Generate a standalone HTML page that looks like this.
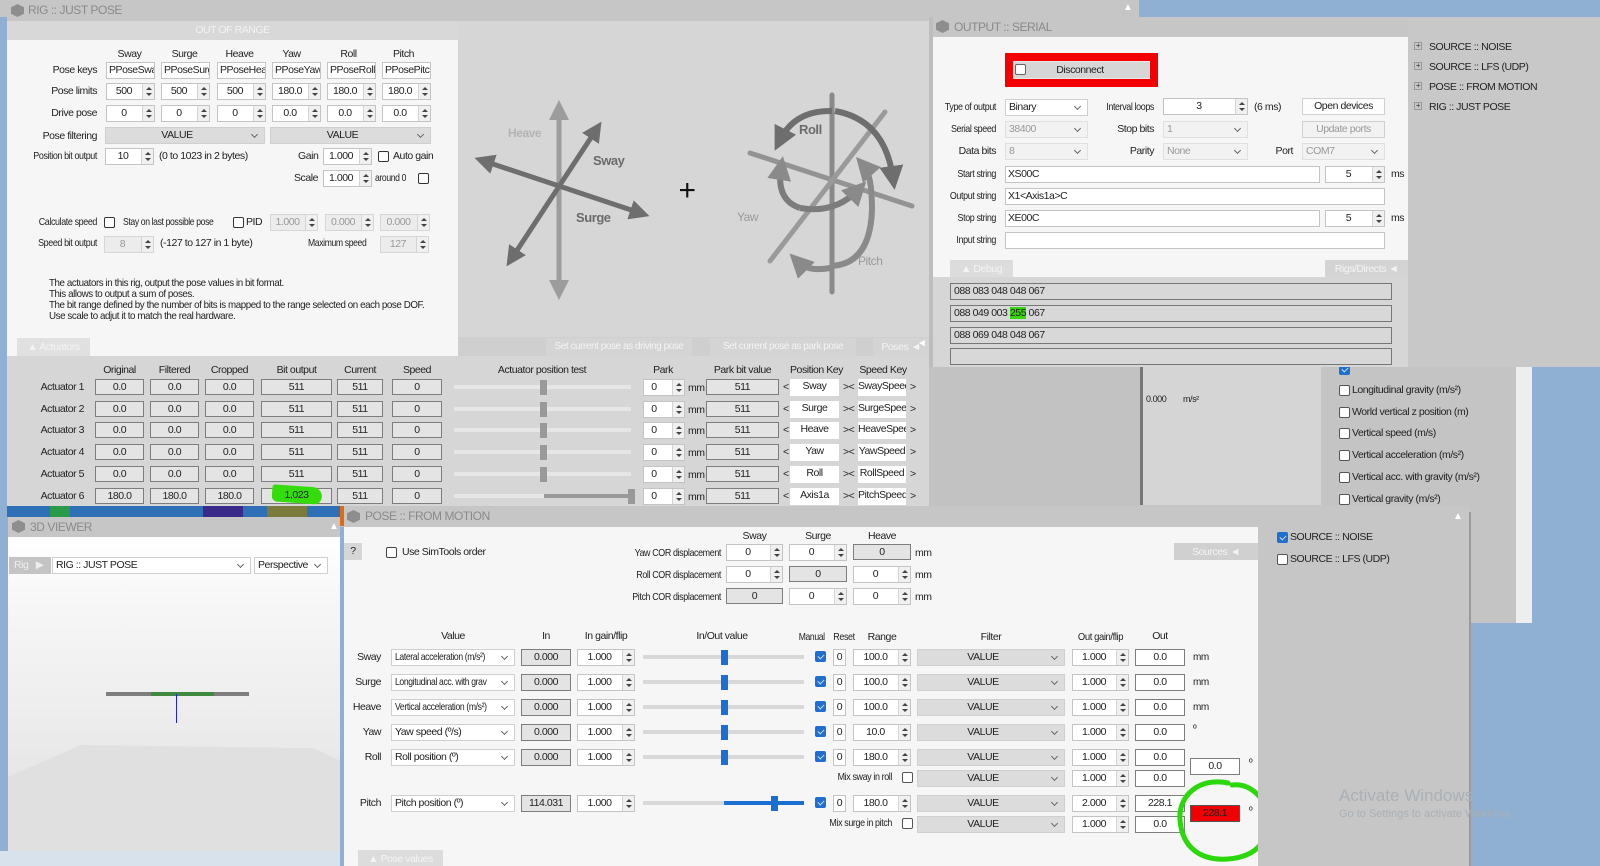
<!DOCTYPE html>
<html><head><meta charset="utf-8">
<style>
*{margin:0;padding:0;box-sizing:border-box}
body{width:1600px;height:866px;overflow:hidden;position:relative;background:#8fb0d2;font-family:"Liberation Sans",sans-serif;font-size:10.5px;color:#222;letter-spacing:-0.45px}
.a{position:absolute;white-space:nowrap}
.r{text-align:right}
.c{text-align:center}
.n{transform:scaleX(.82);transform-origin:left center}
.nr{transform:scaleX(.85);transform-origin:right center}
.b,.ro,.sp,.cb,.btn,.tab{white-space:nowrap;overflow:hidden}
.b{position:absolute;background:#fff;border:1px solid #c4c4c4;height:17px;line-height:15px;text-align:center}
.ro{position:absolute;background:#e4e4e4;border:1px solid #7d7d7d;height:16px;line-height:14px;text-align:center}
.sp{position:absolute;background:#fff;border:1px solid #c4c4c4;height:17px;line-height:15px;text-align:center;padding-right:13px}
.sp i{position:absolute;right:0;top:0;bottom:0;width:12px;background:#f0f0f0;border-left:1px solid #d4d4d4}
.sp i:before{content:"";position:absolute;left:3px;top:3px;border:3px solid transparent;border-bottom:3px solid #444;border-top:0}
.sp i:after{content:"";position:absolute;left:3px;bottom:3px;border:3px solid transparent;border-top:3px solid #444;border-bottom:0}
.dis{background:#ececec;color:#999;border-color:#d6d6d6}
.cb{position:absolute;background:#fff;border:1px solid #cfcfcf;height:17px;line-height:15px;padding-left:3px;padding-right:16px}
.cb:after{content:"";position:absolute;right:7px;top:4px;width:4px;height:4px;border-right:1px solid #666;border-bottom:1px solid #666;transform:rotate(45deg)}
.cg{background:#dcdcdc;text-align:center;padding-left:0}
.ck{position:absolute;width:11px;height:11px;border:1px solid #333;background:#fff;border-radius:2px}
.ckb{position:absolute;width:11px;height:11px;background:#1e6fd0;border-radius:2px;border:1px solid #1e6fd0}
.ckb:after{content:"";position:absolute;left:3px;top:1px;width:3px;height:5px;border-right:1px solid #cfe0f5;border-bottom:1px solid #cfe0f5;transform:rotate(45deg)}
.tb{position:absolute;background:#c6c6c6;color:#8a8a8a;font-size:11px;line-height:20px}
.ic{position:absolute;width:13px;height:13px;background:#8e8e8e;clip-path:polygon(50% 0,100% 25%,100% 75%,50% 100%,0 75%,0 25%)}
.btn{position:absolute;background:#fdfdfd;border:1px solid #d0d0d0;height:17px;line-height:15px;text-align:center}
.tab{position:absolute;background:#d4d4d4;color:#f4f4f4;line-height:18px;height:18px;text-align:center}
.trk{position:absolute;height:4px;background:#d8d8d8}
.trk2{position:absolute;height:4px;background:#e6e6e6}
.th{position:absolute;width:7px;height:15px;background:#999}
.thb{position:absolute;width:7px;height:15px;background:#1a6fd0}
.hd{position:absolute;text-align:center;white-space:nowrap}
</style></head><body>

<div class="a" style="left:0;top:0;width:1139px;height:17px;background:#c6c6c6"></div>
<div class="a" style="left:1123px;top:2px;color:#fff;font-size:10px">▲</div>

<!-- RIG panel -->
<div class="a" style="left:7px;top:0;width:922px;height:506px;background:#d6d6d6"></div>
<div class="tb" style="left:7px;top:0;width:922px;height:21px"><div class="ic" style="left:4px;top:4px"></div><span class="a" style="left:21px;top:0;font-size:12px">RIG :: JUST POSE</span></div>
<div class="a" style="left:7px;top:21px;width:451px;height:19px;background:#d8d8d8;color:#f2f2f2;text-align:center;line-height:19px">OUT OF RANGE</div>
<div class="a" style="left:7px;top:40px;width:451px;height:316px;background:#f6f6f6"></div>
<div class="a" style="left:458px;top:21px;width:471px;height:316px;background:#d6d6d6"></div>
<div class="a" style="left:458px;top:337px;width:471px;height:19px;background:#cfcfcf"></div>

<div class="hd" style="left:105px;top:48px;width:49px">Sway</div>
<div class="hd" style="left:160px;top:48px;width:49px">Surge</div>
<div class="hd" style="left:215px;top:48px;width:49px">Heave</div>
<div class="hd" style="left:267px;top:48px;width:49px">Yaw</div>
<div class="hd" style="left:324px;top:48px;width:49px">Roll</div>
<div class="hd" style="left:379px;top:48px;width:49px">Pitch</div>

<div class="a r" style="left:10px;top:64px;width:87px">Pose keys</div>
<div class="b" style="left:106px;top:62px;width:49px;text-align:left;padding-left:2px">PPoseSway</div>
<div class="b" style="left:161px;top:62px;width:49px;text-align:left;padding-left:2px">PPoseSurge</div>
<div class="b" style="left:217px;top:62px;width:49px;text-align:left;padding-left:2px">PPoseHeave</div>
<div class="b" style="left:272px;top:62px;width:49px;text-align:left;padding-left:2px">PPoseYaw</div>
<div class="b" style="left:327px;top:62px;width:49px;text-align:left;padding-left:2px">PPoseRoll</div>
<div class="b" style="left:382px;top:62px;width:49px;text-align:left;padding-left:2px">PPosePitch</div>

<div class="a r" style="left:10px;top:85px;width:87px">Pose limits</div>
<div class="sp" style="left:106px;top:83px;width:49px">500<i></i></div>
<div class="sp" style="left:161px;top:83px;width:49px">500<i></i></div>
<div class="sp" style="left:217px;top:83px;width:49px">500<i></i></div>
<div class="sp" style="left:272px;top:83px;width:49px">180.0<i></i></div>
<div class="sp" style="left:327px;top:83px;width:49px">180.0<i></i></div>
<div class="sp" style="left:382px;top:83px;width:49px">180.0<i></i></div>

<div class="a r" style="left:10px;top:107px;width:87px">Drive pose</div>
<div class="sp" style="left:106px;top:105px;width:49px">0<i></i></div>
<div class="sp" style="left:161px;top:105px;width:49px">0<i></i></div>
<div class="sp" style="left:217px;top:105px;width:49px">0<i></i></div>
<div class="sp" style="left:272px;top:105px;width:49px">0.0<i></i></div>
<div class="sp" style="left:327px;top:105px;width:49px">0.0<i></i></div>
<div class="sp" style="left:382px;top:105px;width:49px">0.0<i></i></div>

<div class="a r" style="left:10px;top:130px;width:87px">Pose filtering</div>
<div class="cb cg" style="left:105px;top:127px;width:160px">VALUE</div>
<div class="cb cg" style="left:270px;top:127px;width:161px">VALUE</div>

<div class="a r nr" style="left:10px;top:150px;width:87px">Position bit output</div>
<div class="sp" style="left:105px;top:148px;width:49px">10<i></i></div>
<div class="a" style="left:159px;top:150px">(0 to 1023 in 2 bytes)</div>
<div class="a" style="left:298px;top:150px">Gain</div>
<div class="sp" style="left:323px;top:148px;width:49px">1.000<i></i></div>
<div class="ck" style="left:378px;top:151px"></div>
<div class="a" style="left:393px;top:150px">Auto gain</div>
<div class="a" style="left:294px;top:172px">Scale</div>
<div class="sp" style="left:323px;top:170px;width:49px">1.000<i></i></div>
<div class="a n" style="left:375px;top:172px">around 0</div>
<div class="ck" style="left:418px;top:173px"></div>

<div class="a r nr" style="left:10px;top:216px;width:87px">Calculate speed</div>
<div class="ck" style="left:104px;top:217px"></div>
<div class="a n" style="left:123px;top:216px">Stay on last possible pose</div>
<div class="ck" style="left:233px;top:217px"></div>
<div class="a" style="left:246px;top:216px">PID</div>
<div class="sp dis" style="left:270px;top:214px;width:48px">1.000<i></i></div>
<div class="sp dis" style="left:325px;top:214px;width:49px">0.000<i></i></div>
<div class="sp dis" style="left:380px;top:214px;width:50px">0.000<i></i></div>
<div class="a r nr" style="left:10px;top:237px;width:87px">Speed bit output</div>
<div class="sp dis" style="left:104px;top:236px;width:50px">8<i></i></div>
<div class="a" style="left:160px;top:237px">(-127 to 127 in 1 byte)</div>
<div class="a n" style="left:308px;top:237px">Maximum speed</div>
<div class="sp dis" style="left:380px;top:236px;width:49px">127<i></i></div>

<div class="a n" style="left:49px;top:278px;font-size:10.5px;line-height:11px;transform:scaleX(.93)">The actuators in this rig, output the pose values in bit format.<br>This allows to output a sum of poses.<br>The bit range defined by the number of bits is mapped to the range selected on each pose DOF.<br>Use scale to adjut it to match the real hardware.</div>

<svg class="a" style="left:458px;top:40px" width="471" height="296" viewBox="458 40 471 296">
<defs>
<marker id="m1" markerWidth="4" markerHeight="4" refX="2" refY="2" orient="auto-start-reverse"><path d="M0,0 L4,2 L0,4 z" fill="#9c9c9c"/></marker>
<marker id="m2" markerWidth="4" markerHeight="4" refX="2" refY="2" orient="auto-start-reverse"><path d="M0,0 L4,2 L0,4 z" fill="#6e6e6e"/></marker>
<marker id="m3" markerWidth="4" markerHeight="4" refX="2" refY="2" orient="auto"><path d="M0,0 L4,2 L0,4 z" fill="#6e6e6e"/></marker>
<marker id="m4" markerWidth="4" markerHeight="4" refX="2" refY="2" orient="auto"><path d="M0,0 L4,2 L0,4 z" fill="#8a8a8a"/></marker>
</defs>
<line x1="559" y1="110" x2="559" y2="290" stroke="#9c9c9c" stroke-width="5" marker-start="url(#m1)" marker-end="url(#m1)"/>
<line x1="484" y1="161" x2="640" y2="213" stroke="#6e6e6e" stroke-width="5" marker-start="url(#m2)" marker-end="url(#m2)"/>
<line x1="512" y1="258" x2="596" y2="130" stroke="#6e6e6e" stroke-width="5" marker-start="url(#m2)" marker-end="url(#m2)"/>
<text x="508" y="137" font-family="Liberation Sans" font-size="12" fill="#b4b4b4" font-weight="bold">Heave</text>
<text x="593" y="165" font-family="Liberation Sans" font-size="13" fill="#6a6a6a" font-weight="bold">Sway</text>
<text x="576" y="222" font-family="Liberation Sans" font-size="13" fill="#6a6a6a" font-weight="bold">Surge</text>
<text x="687" y="200" font-family="Liberation Sans" font-size="30" fill="#111" text-anchor="middle">+</text>
<line x1="832" y1="95" x2="832" y2="292" stroke="#8a8a8a" stroke-width="5" stroke-linecap="round"/>
<line x1="750" y1="153" x2="912" y2="206" stroke="#939393" stroke-width="5" stroke-linecap="round"/>
<line x1="770" y1="261" x2="885" y2="112" stroke="#9a9a9a" stroke-width="5" stroke-linecap="round"/>
<path d="M832,111 Q795,110 780,140" fill="none" stroke="#6e6e6e" stroke-width="6" marker-end="url(#m3)"/>
<path d="M835,111 Q885,120 893,178" fill="none" stroke="#6e6e6e" stroke-width="6" marker-end="url(#m3)"/>
<path d="M800,208 Q835,214 858,190" fill="none" stroke="#7c7c7c" stroke-width="6" marker-end="url(#m4)"/>
<path d="M800,208 Q776,200 781,168" fill="none" stroke="#7c7c7c" stroke-width="6" marker-end="url(#m4)"/>
<path d="M830,266 Q870,265 872,210 Q872,175 864,166" fill="none" stroke="#8a8a8a" stroke-width="6" marker-end="url(#m4)"/>
<path d="M830,268 Q808,272 798,262" fill="none" stroke="#8a8a8a" stroke-width="6" marker-end="url(#m4)"/>
<text x="799" y="134" font-family="Liberation Sans" font-size="13" fill="#6a6a6a" font-weight="bold">Roll</text>
<text x="737" y="221" font-family="Liberation Sans" font-size="12" fill="#9a9a9a">Yaw</text>
<text x="858" y="265" font-family="Liberation Sans" font-size="12" fill="#9a9a9a">Pitch</text>
</svg>

<div class="tab" style="left:17px;top:338px;width:73px;background:#e0e0e0">▲ Actuators</div>
<div class="tab" style="left:546px;top:338px;width:146px;font-size:10px">Set current pose as driving pose</div>
<div class="tab" style="left:710px;top:338px;width:146px;font-size:10px">Set current pose as park pose</div>
<div class="tab" style="left:873px;top:338px;width:56px">Poses ◄</div>

<div class="hd" style="left:95px;top:364px;width:49px">Original</div>
<div class="hd" style="left:150px;top:364px;width:49px">Filtered</div>
<div class="hd" style="left:205px;top:364px;width:49px">Cropped</div>
<div class="hd" style="left:261px;top:364px;width:71px">Bit output</div>
<div class="hd" style="left:337px;top:364px;width:46px">Current</div>
<div class="hd" style="left:392px;top:364px;width:50px">Speed</div>
<div class="hd" style="left:480px;top:364px;width:124px">Actuator position test</div>
<div class="hd" style="left:643px;top:364px;width:40px">Park</div>
<div class="hd" style="left:706px;top:364px;width:73px">Park bit value</div>
<div class="hd" style="left:790px;top:364px;width:50px">Position Key</div>
<div class="hd" style="left:858px;top:364px;width:50px">Speed Key</div>

<div class="a r" style="left:20px;top:381px;width:64px">Actuator 1</div>
<div class="ro" style="left:95px;top:379px;width:49px">0.0</div><div class="ro" style="left:150px;top:379px;width:49px">0.0</div><div class="ro" style="left:205px;top:379px;width:49px">0.0</div><div class="ro" style="left:261px;top:379px;width:71px">511</div><div class="ro" style="left:337px;top:379px;width:46px">511</div><div class="ro" style="left:392px;top:379px;width:50px">0</div>
<div class="trk2" style="left:454px;top:385px;width:177px"></div><div class="th" style="left:540px;top:380px"></div>
<div class="sp" style="left:643px;top:379px;width:42px;padding-right:20px">0<i></i></div><div class="a" style="left:688px;top:382px">mm</div>
<div class="ro" style="left:706px;top:379px;width:73px">511</div><div class="a" style="left:783px;top:381px">&lt;</div>
<div class="b" style="left:790px;top:379px;width:49px;border:0">Sway</div><div class="a" style="left:843px;top:381px">&gt;&lt;</div>
<div class="b" style="left:858px;top:379px;width:48px;border:0">SwaySpeed</div><div class="a" style="left:910px;top:381px">&gt;</div>

<div class="a r" style="left:20px;top:403px;width:64px">Actuator 2</div>
<div class="ro" style="left:95px;top:401px;width:49px">0.0</div><div class="ro" style="left:150px;top:401px;width:49px">0.0</div><div class="ro" style="left:205px;top:401px;width:49px">0.0</div><div class="ro" style="left:261px;top:401px;width:71px">511</div><div class="ro" style="left:337px;top:401px;width:46px">511</div><div class="ro" style="left:392px;top:401px;width:50px">0</div>
<div class="trk2" style="left:454px;top:407px;width:177px"></div><div class="th" style="left:540px;top:402px"></div>
<div class="sp" style="left:643px;top:401px;width:42px;padding-right:20px">0<i></i></div><div class="a" style="left:688px;top:404px">mm</div>
<div class="ro" style="left:706px;top:401px;width:73px">511</div><div class="a" style="left:783px;top:403px">&lt;</div>
<div class="b" style="left:790px;top:401px;width:49px;border:0">Surge</div><div class="a" style="left:843px;top:403px">&gt;&lt;</div>
<div class="b" style="left:858px;top:401px;width:48px;border:0">SurgeSpeed</div><div class="a" style="left:910px;top:403px">&gt;</div>

<div class="a r" style="left:20px;top:424px;width:64px">Actuator 3</div>
<div class="ro" style="left:95px;top:422px;width:49px">0.0</div><div class="ro" style="left:150px;top:422px;width:49px">0.0</div><div class="ro" style="left:205px;top:422px;width:49px">0.0</div><div class="ro" style="left:261px;top:422px;width:71px">511</div><div class="ro" style="left:337px;top:422px;width:46px">511</div><div class="ro" style="left:392px;top:422px;width:50px">0</div>
<div class="trk2" style="left:454px;top:428px;width:177px"></div><div class="th" style="left:540px;top:423px"></div>
<div class="sp" style="left:643px;top:422px;width:42px;padding-right:20px">0<i></i></div><div class="a" style="left:688px;top:425px">mm</div>
<div class="ro" style="left:706px;top:422px;width:73px">511</div><div class="a" style="left:783px;top:424px">&lt;</div>
<div class="b" style="left:790px;top:422px;width:49px;border:0">Heave</div><div class="a" style="left:843px;top:424px">&gt;&lt;</div>
<div class="b" style="left:858px;top:422px;width:48px;border:0">HeaveSpeed</div><div class="a" style="left:910px;top:424px">&gt;</div>

<div class="a r" style="left:20px;top:446px;width:64px">Actuator 4</div>
<div class="ro" style="left:95px;top:444px;width:49px">0.0</div><div class="ro" style="left:150px;top:444px;width:49px">0.0</div><div class="ro" style="left:205px;top:444px;width:49px">0.0</div><div class="ro" style="left:261px;top:444px;width:71px">511</div><div class="ro" style="left:337px;top:444px;width:46px">511</div><div class="ro" style="left:392px;top:444px;width:50px">0</div>
<div class="trk2" style="left:454px;top:450px;width:177px"></div><div class="th" style="left:540px;top:445px"></div>
<div class="sp" style="left:643px;top:444px;width:42px;padding-right:20px">0<i></i></div><div class="a" style="left:688px;top:447px">mm</div>
<div class="ro" style="left:706px;top:444px;width:73px">511</div><div class="a" style="left:783px;top:446px">&lt;</div>
<div class="b" style="left:790px;top:444px;width:49px;border:0">Yaw</div><div class="a" style="left:843px;top:446px">&gt;&lt;</div>
<div class="b" style="left:858px;top:444px;width:48px;border:0">YawSpeed</div><div class="a" style="left:910px;top:446px">&gt;</div>

<div class="a r" style="left:20px;top:468px;width:64px">Actuator 5</div>
<div class="ro" style="left:95px;top:466px;width:49px">0.0</div><div class="ro" style="left:150px;top:466px;width:49px">0.0</div><div class="ro" style="left:205px;top:466px;width:49px">0.0</div><div class="ro" style="left:261px;top:466px;width:71px">511</div><div class="ro" style="left:337px;top:466px;width:46px">511</div><div class="ro" style="left:392px;top:466px;width:50px">0</div>
<div class="trk2" style="left:454px;top:472px;width:177px"></div><div class="th" style="left:540px;top:467px"></div>
<div class="sp" style="left:643px;top:466px;width:42px;padding-right:20px">0<i></i></div><div class="a" style="left:688px;top:469px">mm</div>
<div class="ro" style="left:706px;top:466px;width:73px">511</div><div class="a" style="left:783px;top:468px">&lt;</div>
<div class="b" style="left:790px;top:466px;width:49px;border:0">Roll</div><div class="a" style="left:843px;top:468px">&gt;&lt;</div>
<div class="b" style="left:858px;top:466px;width:48px;border:0">RollSpeed</div><div class="a" style="left:910px;top:468px">&gt;</div>

<div class="a r" style="left:20px;top:490px;width:64px">Actuator 6</div>
<div class="ro" style="left:95px;top:488px;width:49px">180.0</div><div class="ro" style="left:150px;top:488px;width:49px">180.0</div><div class="ro" style="left:205px;top:488px;width:49px">180.0</div>
<div class="ro" style="left:261px;top:488px;width:71px"></div>
<div class="a" style="left:272px;top:486px;width:50px;height:17px;background:#35dc0c;border-radius:3px 10px 8px 6px;transform:rotate(4deg)"></div>
<div class="a c" style="left:261px;top:489px;width:71px">1,023</div>
<div class="ro" style="left:337px;top:488px;width:46px">511</div><div class="ro" style="left:392px;top:488px;width:50px">0</div>
<div class="trk2" style="left:454px;top:494px;width:177px"></div><div class="trk" style="left:544px;top:494px;width:87px;background:#9a9a9a"></div><div class="th" style="left:628px;top:489px"></div>
<div class="sp" style="left:643px;top:488px;width:42px;padding-right:20px">0<i></i></div><div class="a" style="left:688px;top:491px">mm</div>
<div class="ro" style="left:706px;top:488px;width:73px">511</div><div class="a" style="left:783px;top:490px">&lt;</div>
<div class="b" style="left:790px;top:488px;width:49px;border:0">Axis1a</div><div class="a" style="left:843px;top:490px">&gt;&lt;</div>
<div class="b" style="left:858px;top:488px;width:48px;border:0">PitchSpeed</div><div class="a" style="left:910px;top:490px">&gt;</div>

<div class="a" style="left:7px;top:506px;width:333px;height:11px;background:#2f6fb8"></div>
<div class="a" style="left:50px;top:506px;width:20px;height:11px;background:#2a9a4a"></div>
<div class="a" style="left:203px;top:506px;width:40px;height:11px;background:#3a2a8a"></div>
<div class="a" style="left:267px;top:506px;width:40px;height:11px;background:#7a7a3a"></div>

<div class="a" style="left:929px;top:365px;width:211px;height:162px;background:#c2c2c2"></div>
<div class="a" style="left:340px;top:506px;width:800px;height:21px;background:#c6c6c6"></div>

<div class="a" style="left:1140px;top:365px;width:376px;height:258px;background:#c4c4c4"></div>
<div class="a" style="left:1140px;top:365px;width:3px;height:140px;background:#777"></div>
<div class="a" style="left:1143px;top:365px;width:178px;height:140px;background:#d5d5d5"></div>
<div class="a" style="left:1146px;top:394px;font-size:9px">0.000</div>
<div class="a" style="left:1183px;top:394px;font-size:9px">m/s²</div>
<div class="a" style="left:1516px;top:365px;width:16px;height:258px;background:#eeeeee"></div>
<div class="ckb" style="left:1339px;top:364px"></div>
<div class="ck" style="left:1339px;top:385px;border-color:#555"></div><div class="a" style="left:1352px;top:384px">Longitudinal gravity (m/s²)</div>
<div class="ck" style="left:1339px;top:407px;border-color:#555"></div><div class="a" style="left:1352px;top:406px">World vertical z position (m)</div>
<div class="ck" style="left:1339px;top:428px;border-color:#555"></div><div class="a" style="left:1352px;top:427px">Vertical speed (m/s)</div>
<div class="ck" style="left:1339px;top:450px;border-color:#555"></div><div class="a" style="left:1352px;top:449px">Vertical acceleration (m/s²)</div>
<div class="ck" style="left:1339px;top:472px;border-color:#555"></div><div class="a" style="left:1352px;top:471px">Vertical acc. with gravity (m/s²)</div>
<div class="ck" style="left:1339px;top:494px;border-color:#555"></div><div class="a" style="left:1352px;top:493px">Vertical gravity (m/s²)</div>

<!-- OUTPUT SERIAL -->
<div class="a" style="left:929px;top:17px;width:671px;height:350px;background:#c8c8c8"></div>
<div class="a" style="left:929px;top:17px;width:4px;height:350px;background:#bdbdbd"></div>
<div class="a" style="left:917px;top:338px;color:#fff;font-size:10px">◄</div>
<div class="tb" style="left:933px;top:17px;width:475px;height:20px"><div class="ic" style="left:3px;top:3px"></div><span class="a" style="left:21px;top:0;font-size:12px">OUTPUT :: SERIAL</span></div>
<div class="a" style="left:933px;top:37px;width:475px;height:223px;background:#f6f6f6"></div>
<div class="a" style="left:933px;top:277px;width:475px;height:90px;background:#d6d6d6"></div>
<div class="a" style="left:933px;top:260px;width:475px;height:17px;background:#f6f6f6"></div>
<div class="tab" style="left:950px;top:260px;width:63px;height:17px;background:#dcdcdc">▲ Debug</div>
<div class="tab" style="left:1325px;top:260px;width:83px;height:17px">Rigs/Directs ◄</div>

<div class="a" style="left:1005px;top:53px;width:153px;height:34px;background:#f40000"></div>
<div class="a" style="left:1013px;top:61px;width:137px;height:18px;background:#d6d6d6;border:1px solid #e8e8e8"></div>
<div class="ck" style="left:1015px;top:64px;border-color:#666"></div>
<div class="a c" style="left:1030px;top:64px;width:100px">Disconnect</div>

<div class="a r nr" style="left:930px;top:101px;width:66px">Type of output</div>
<div class="cb" style="left:1005px;top:99px;width:83px">Binary</div>
<div class="a r nr" style="left:1086px;top:101px;width:68px">Interval loops</div>
<div class="sp" style="left:1163px;top:98px;width:85px">3<i></i></div>
<div class="a" style="left:1254px;top:101px">(6 ms)</div>
<div class="btn" style="left:1302px;top:98px;width:83px">Open devices</div>

<div class="a r nr" style="left:930px;top:123px;width:66px">Serial speed</div>
<div class="cb" style="left:1005px;top:121px;width:83px;color:#999;background:#f2f2f2;border-color:#e0e0e0">38400</div>
<div class="a r" style="left:1090px;top:123px;width:64px">Stop bits</div>
<div class="cb" style="left:1163px;top:121px;width:85px;color:#999;background:#f2f2f2;border-color:#e0e0e0">1</div>
<div class="btn" style="left:1302px;top:121px;width:83px;color:#999;background:#f2f2f2">Update ports</div>

<div class="a r" style="left:930px;top:145px;width:66px">Data bits</div>
<div class="cb" style="left:1005px;top:143px;width:83px;color:#999;background:#f2f2f2;border-color:#e0e0e0">8</div>
<div class="a r" style="left:1090px;top:145px;width:64px">Parity</div>
<div class="cb" style="left:1163px;top:143px;width:85px;color:#999;background:#f2f2f2;border-color:#e0e0e0">None</div>
<div class="a r" style="left:1260px;top:145px;width:33px">Port</div>
<div class="cb" style="left:1302px;top:143px;width:83px;color:#999;background:#f2f2f2;border-color:#e0e0e0">COM7</div>

<div class="a r nr" style="left:930px;top:168px;width:66px">Start string</div>
<div class="b" style="left:1005px;top:166px;width:315px;text-align:left;padding-left:2px">XS00C</div>
<div class="sp" style="left:1325px;top:166px;width:60px">5<i></i></div>
<div class="a" style="left:1391px;top:168px">ms</div>
<div class="a r nr" style="left:930px;top:190px;width:66px">Output string</div>
<div class="b" style="left:1005px;top:188px;width:380px;text-align:left;padding-left:2px">X1&lt;Axis1a&gt;C</div>
<div class="a r nr" style="left:930px;top:212px;width:66px">Stop string</div>
<div class="b" style="left:1005px;top:210px;width:315px;text-align:left;padding-left:2px">XE00C</div>
<div class="sp" style="left:1325px;top:210px;width:60px">5<i></i></div>
<div class="a" style="left:1391px;top:212px">ms</div>
<div class="a r nr" style="left:930px;top:234px;width:66px">Input string</div>
<div class="b" style="left:1005px;top:232px;width:380px"></div>

<div class="a" style="left:950px;top:283px;width:442px;height:17px;border:1px solid #777;background:#d8d8d8;padding-left:3px;line-height:15px">088 083 048 048 067</div>
<div class="a" style="left:950px;top:305px;width:442px;height:17px;border:1px solid #777;background:#d8d8d8;padding-left:3px;line-height:15px">088 049 003 <span style="background:#3ad40e">255</span> 067</div>
<div class="a" style="left:950px;top:327px;width:442px;height:17px;border:1px solid #777;background:#d8d8d8;padding-left:3px;line-height:15px">088 069 048 048 067</div>
<div class="a" style="left:950px;top:348px;width:442px;height:17px;border:1px solid #777;background:#d8d8d8"></div>

<div class="a" style="left:1414px;top:42px;width:8px;height:8px;border:1px solid #999;font-size:8px;line-height:6px;text-align:center;color:#333">+</div><div class="a" style="left:1429px;top:41px">SOURCE :: NOISE</div>
<div class="a" style="left:1414px;top:62px;width:8px;height:8px;border:1px solid #999;font-size:8px;line-height:6px;text-align:center;color:#333">+</div><div class="a" style="left:1429px;top:61px">SOURCE :: LFS (UDP)</div>
<div class="a" style="left:1414px;top:82px;width:8px;height:8px;border:1px solid #999;font-size:8px;line-height:6px;text-align:center;color:#333">+</div><div class="a" style="left:1429px;top:81px">POSE :: FROM MOTION</div>
<div class="a" style="left:1414px;top:102px;width:8px;height:8px;border:1px solid #999;font-size:8px;line-height:6px;text-align:center;color:#333">+</div><div class="a" style="left:1429px;top:101px">RIG :: JUST POSE</div>

<!-- 3D viewer -->
<div class="tb" style="left:8px;top:517px;width:332px;height:20px"><div class="ic" style="left:4px;top:3px"></div><span class="a" style="left:22px;top:0;font-size:12px">3D VIEWER</span><span class="a" style="left:321px;top:0;color:#fff;font-size:10px">▲</span></div>
<div class="a" style="left:8px;top:537px;width:332px;height:314px;background:linear-gradient(#ffffff 0%,#f7f7f7 20%,#ececec 60%,#dedede 100%)"></div>
<div class="a" style="left:8px;top:745px;width:332px;height:106px;background:#e0e0e0;clip-path:polygon(0 30%,22% 0,92% 3%,100% 15%,100% 100%,0 100%)"></div>
<div class="a" style="left:9px;top:557px;width:42px;height:17px;background:#c4c4c4;color:#eee;line-height:17px;padding-left:5px">Rig &nbsp; ▶</div>
<div class="cb" style="left:52px;top:557px;width:199px">RIG :: JUST POSE</div>
<div class="cb" style="left:254px;top:557px;width:74px">Perspective</div>
<div class="a" style="left:106px;top:692px;width:143px;height:4px;background:#7e7e7e"></div>
<div class="a" style="left:151px;top:692px;width:63px;height:4px;background:#3f8a3f"></div>
<div class="a" style="left:176px;top:694px;width:1px;height:29px;background:#2020f0"></div>
<div class="a" style="left:0;top:851px;width:340px;height:15px;background:#d8e2ec"></div>

<!-- POSE :: FROM MOTION -->
<div class="tb" style="left:344px;top:506px;width:914px;height:21px"><div class="ic" style="left:3px;top:4px"></div><span class="a" style="left:21px;top:0;font-size:12px">POSE :: FROM MOTION</span></div>
<div class="a" style="left:340px;top:506px;width:4px;height:20px;background:#e06a10"></div>
<div class="a" style="left:344px;top:527px;width:914px;height:339px;background:#f6f6f6"></div>
<div class="a c" style="left:344px;top:543px;width:18px;height:17px;background:#d6d6d6;line-height:17px">?</div>
<div class="ck" style="left:386px;top:547px;border-color:#444"></div>
<div class="a" style="left:402px;top:546px">Use SimTools order</div>
<div class="tab" style="left:1174px;top:543px;width:84px;height:17px;background:#d0d0d0">Sources ◄</div>

<div class="hd" style="left:726px;top:530px;width:57px">Sway</div>
<div class="hd" style="left:789px;top:530px;width:58px">Surge</div>
<div class="hd" style="left:853px;top:530px;width:58px">Heave</div>
<div class="a r nr" style="left:600px;top:547px;width:121px">Yaw COR displacement</div>
<div class="sp" style="left:726px;top:544px;width:57px">0<i></i></div>
<div class="sp" style="left:789px;top:544px;width:58px">0<i></i></div>
<div class="ro" style="left:853px;top:544px;width:58px">0</div>
<div class="a" style="left:915px;top:547px">mm</div>
<div class="a r nr" style="left:600px;top:569px;width:121px">Roll COR displacement</div>
<div class="sp" style="left:726px;top:566px;width:57px">0<i></i></div>
<div class="ro" style="left:789px;top:566px;width:58px">0</div>
<div class="sp" style="left:853px;top:566px;width:58px">0<i></i></div>
<div class="a" style="left:915px;top:569px">mm</div>
<div class="a r nr" style="left:600px;top:591px;width:121px">Pitch COR displacement</div>
<div class="ro" style="left:726px;top:588px;width:57px">0</div>
<div class="sp" style="left:789px;top:588px;width:58px">0<i></i></div>
<div class="sp" style="left:853px;top:588px;width:58px">0<i></i></div>
<div class="a" style="left:915px;top:591px">mm</div>

<div class="hd" style="left:391px;top:630px;width:124px">Value</div>
<div class="hd" style="left:521px;top:630px;width:50px">In</div>
<div class="hd" style="left:577px;top:630px;width:58px">In gain/flip</div>
<div class="hd" style="left:680px;top:630px;width:84px">In/Out value</div>
<div class="hd" style="left:796px;top:631px;width:30px;transform:scaleX(.82)">Manual</div>
<div class="hd" style="left:829px;top:631px;width:30px;transform:scaleX(.85)">Reset</div>
<div class="hd" style="left:853px;top:631px;width:58px">Range</div>
<div class="hd" style="left:917px;top:631px;width:148px">Filter</div>
<div class="hd" style="left:1072px;top:631px;width:57px;transform:scaleX(.9)">Out gain/flip</div>
<div class="hd" style="left:1135px;top:630px;width:50px">Out</div>

<div class="a r" style="left:340px;top:651px;width:41px">Sway</div>
<div class="cb" style="left:391px;top:649px;width:124px"><span class="n" style="display:inline-block">Lateral acceleration (m/s²)</span></div>
<div class="ro" style="left:521px;top:649px;width:50px;height:17px">0.000</div>
<div class="sp" style="left:577px;top:649px;width:58px">1.000<i></i></div>
<div class="trk" style="left:643px;top:655px;width:161px"></div><div class="thb" style="left:721px;top:650px"></div>
<div class="ckb" style="left:815px;top:651px"></div><div class="b" style="left:833px;top:649px;width:13px">0</div>
<div class="sp" style="left:853px;top:649px;width:58px">100.0<i></i></div>
<div class="cb cg" style="left:917px;top:649px;width:148px">VALUE</div>
<div class="sp" style="left:1072px;top:649px;width:57px">1.000<i></i></div>
<div class="ro" style="left:1135px;top:649px;width:50px;height:17px;background:#fff">0.0</div>
<div class="a" style="left:1193px;top:652px;font-size:10px">mm</div>

<div class="a r" style="left:340px;top:676px;width:41px">Surge</div>
<div class="cb" style="left:391px;top:674px;width:124px"><span class="n" style="display:inline-block">Longitudinal acc. with grav</span></div>
<div class="ro" style="left:521px;top:674px;width:50px;height:17px">0.000</div>
<div class="sp" style="left:577px;top:674px;width:58px">1.000<i></i></div>
<div class="trk" style="left:643px;top:680px;width:161px"></div><div class="thb" style="left:721px;top:675px"></div>
<div class="ckb" style="left:815px;top:676px"></div><div class="b" style="left:833px;top:674px;width:13px">0</div>
<div class="sp" style="left:853px;top:674px;width:58px">100.0<i></i></div>
<div class="cb cg" style="left:917px;top:674px;width:148px">VALUE</div>
<div class="sp" style="left:1072px;top:674px;width:57px">1.000<i></i></div>
<div class="ro" style="left:1135px;top:674px;width:50px;height:17px;background:#fff">0.0</div>
<div class="a" style="left:1193px;top:677px;font-size:10px">mm</div>

<div class="a r" style="left:340px;top:701px;width:41px">Heave</div>
<div class="cb" style="left:391px;top:699px;width:124px"><span class="n" style="display:inline-block">Vertical acceleration (m/s²)</span></div>
<div class="ro" style="left:521px;top:699px;width:50px;height:17px">0.000</div>
<div class="sp" style="left:577px;top:699px;width:58px">1.000<i></i></div>
<div class="trk" style="left:643px;top:705px;width:161px"></div><div class="thb" style="left:721px;top:700px"></div>
<div class="ckb" style="left:815px;top:701px"></div><div class="b" style="left:833px;top:699px;width:13px">0</div>
<div class="sp" style="left:853px;top:699px;width:58px">100.0<i></i></div>
<div class="cb cg" style="left:917px;top:699px;width:148px">VALUE</div>
<div class="sp" style="left:1072px;top:699px;width:57px">1.000<i></i></div>
<div class="ro" style="left:1135px;top:699px;width:50px;height:17px;background:#fff">0.0</div>
<div class="a" style="left:1193px;top:702px;font-size:10px">mm</div>

<div class="a r" style="left:340px;top:726px;width:41px">Yaw</div>
<div class="cb" style="left:391px;top:724px;width:124px">Yaw speed (º/s)</div>
<div class="ro" style="left:521px;top:724px;width:50px;height:17px">0.000</div>
<div class="sp" style="left:577px;top:724px;width:58px">1.000<i></i></div>
<div class="trk" style="left:643px;top:730px;width:161px"></div><div class="thb" style="left:721px;top:725px"></div>
<div class="ckb" style="left:815px;top:726px"></div><div class="b" style="left:833px;top:724px;width:13px">0</div>
<div class="sp" style="left:853px;top:724px;width:58px">10.0<i></i></div>
<div class="cb cg" style="left:917px;top:724px;width:148px">VALUE</div>
<div class="sp" style="left:1072px;top:724px;width:57px">1.000<i></i></div>
<div class="ro" style="left:1135px;top:724px;width:50px;height:17px;background:#fff">0.0</div>
<div class="a" style="left:1193px;top:724px;font-size:10px">º</div>

<div class="a r" style="left:340px;top:751px;width:41px">Roll</div>
<div class="cb" style="left:391px;top:749px;width:124px">Roll position (º)</div>
<div class="ro" style="left:521px;top:749px;width:50px;height:17px">0.000</div>
<div class="sp" style="left:577px;top:749px;width:58px">1.000<i></i></div>
<div class="trk" style="left:643px;top:755px;width:161px"></div><div class="thb" style="left:721px;top:750px"></div>
<div class="ckb" style="left:815px;top:751px"></div><div class="b" style="left:833px;top:749px;width:13px">0</div>
<div class="sp" style="left:853px;top:749px;width:58px">180.0<i></i></div>
<div class="cb cg" style="left:917px;top:749px;width:148px">VALUE</div>
<div class="sp" style="left:1072px;top:749px;width:57px">1.000<i></i></div>
<div class="ro" style="left:1135px;top:749px;width:50px;height:17px;background:#fff">0.0</div>

<div class="a r nr" style="left:780px;top:771px;width:112px">Mix sway in roll</div>
<div class="ck" style="left:902px;top:772px;border-color:#555"></div>
<div class="cb cg" style="left:917px;top:770px;width:148px">VALUE</div>
<div class="sp" style="left:1072px;top:770px;width:57px">1.000<i></i></div>
<div class="ro" style="left:1135px;top:770px;width:50px;height:17px;background:#fff">0.0</div>
<div class="ro" style="left:1190px;top:758px;width:50px;height:17px;background:#fff">0.0</div>
<div class="a" style="left:1249px;top:758px;font-size:10px">º</div>

<div class="a r" style="left:340px;top:797px;width:41px">Pitch</div>
<div class="cb" style="left:391px;top:795px;width:124px">Pitch position (º)</div>
<div class="ro" style="left:521px;top:795px;width:50px;height:17px">114.031</div>
<div class="sp" style="left:577px;top:795px;width:58px">1.000<i></i></div>
<div class="trk" style="left:643px;top:801px;width:161px"></div><div class="trk" style="left:724px;top:801px;width:80px;background:#1a6fd0"></div><div class="thb" style="left:771px;top:796px"></div>
<div class="ckb" style="left:815px;top:797px"></div><div class="b" style="left:833px;top:795px;width:13px">0</div>
<div class="sp" style="left:853px;top:795px;width:58px">180.0<i></i></div>
<div class="cb cg" style="left:917px;top:795px;width:148px">VALUE</div>
<div class="sp" style="left:1072px;top:795px;width:57px">2.000<i></i></div>
<div class="ro" style="left:1135px;top:795px;width:50px;height:17px;background:#fff;text-align:left;padding-left:12px">228.1</div>

<div class="a r nr" style="left:780px;top:817px;width:112px">Mix surge in pitch</div>
<div class="ck" style="left:902px;top:818px;border-color:#555"></div>
<div class="cb cg" style="left:917px;top:816px;width:148px">VALUE</div>
<div class="sp" style="left:1072px;top:816px;width:57px">1.000<i></i></div>
<div class="ro" style="left:1135px;top:816px;width:50px;height:17px;background:#fff">0.0</div>

<div class="a c" style="left:1190px;top:805px;width:50px;height:17px;background:#f00000;border:1px solid #555;line-height:15px;color:#222">228.1</div>
<div class="a" style="left:1249px;top:806px;font-size:10px">º</div>
<svg class="a" style="left:1170px;top:775px" width="110" height="91"><path d="M58,8 C30,2 8,20 10,45 C12,72 30,86 58,84 C88,82 102,62 98,40 C94,20 78,8 62,10" fill="none" stroke="#2bd80a" stroke-width="5" stroke-linecap="round"/></svg>

<div class="tab" style="left:358px;top:850px;width:85px;height:16px;background:#dcdcdc">▲ Pose values</div>

<div class="a" style="left:1258px;top:506px;width:212px;height:360px;background:#c6c6c6"></div>
<div class="a" style="left:1469px;top:512px;width:2px;height:354px;background:#9a9a9a"></div>
<div class="a" style="left:1453px;top:511px;color:#fff;font-size:10px">▲</div>
<div class="ckb" style="left:1277px;top:532px"></div><div class="a" style="left:1290px;top:531px">SOURCE :: NOISE</div>
<div class="ck" style="left:1277px;top:554px;border-color:#555"></div><div class="a" style="left:1290px;top:553px">SOURCE :: LFS (UDP)</div>
<div class="a" style="left:1339px;top:786px;font-size:17px;color:#a9b0b6;letter-spacing:0">Activate Windows</div>
<div class="a" style="left:1339px;top:808px;font-size:11px;color:#a9b0b6;letter-spacing:0">Go to Settings to activate Windows.</div>
</body></html>
